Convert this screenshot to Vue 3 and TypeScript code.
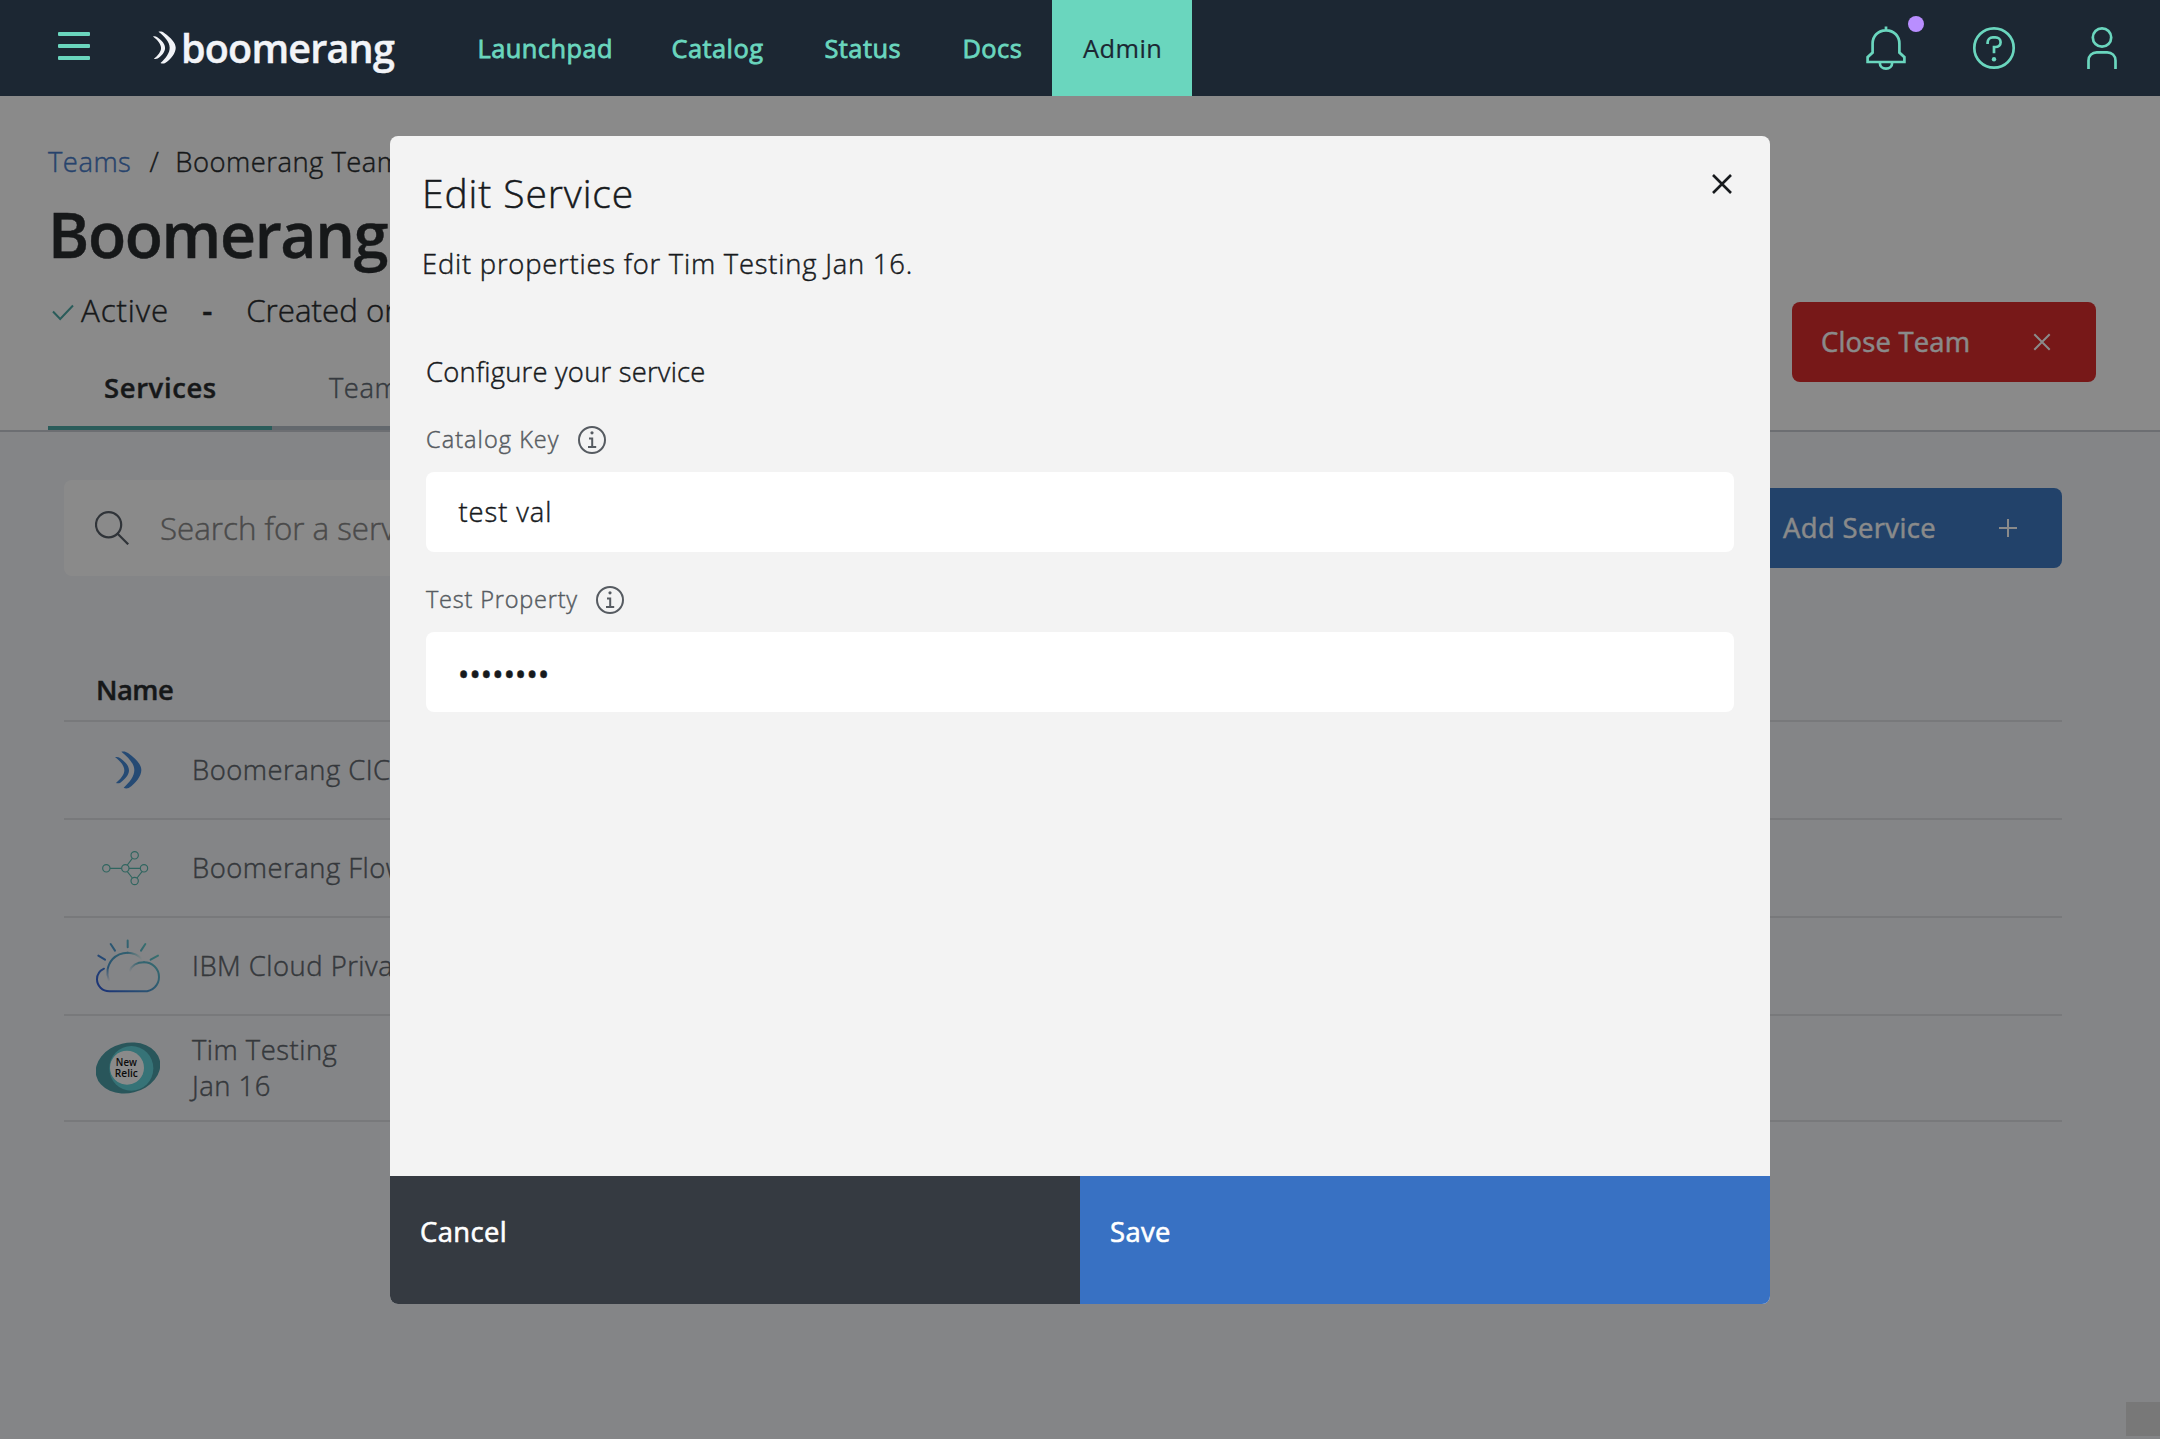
<script setup lang="ts">
interface NavLink {
  label: string
  width: number
  active?: boolean
}
interface Service {
  icon: 'boomerang' | 'flow' | 'cloud' | 'relic'
  name: string
}
interface Field {
  label: string
  value: string
  secret?: boolean
}

const links: NavLink[] = [
  { label: 'Launchpad', width: 194 },
  { label: 'Catalog', width: 153 },
  { label: 'Status', width: 138 },
  { label: 'Docs', width: 119 },
  { label: 'Admin', width: 140, active: true },
]

const services: Service[] = [
  { icon: 'boomerang', name: 'Boomerang CICD' },
  { icon: 'flow', name: 'Boomerang Flow' },
  { icon: 'cloud', name: 'IBM Cloud Private' },
  { icon: 'relic', name: 'Tim Testing\nJan 16' },
]

const fields: Field[] = [
  { label: 'Catalog Key', value: 'test val' },
  { label: 'Test Property', value: '••••••••', secret: true },
]

const wingOuter =
  'M364 335C372 333 378 335 384 339C408 356 424 374 424 390C424 408 408 430 386 444C381 446 375 446 371 443C390 426 403 408 403 390C403 372 386 352 364 335Z'
const wingInner =
  'M345 351C351 350 356 351 360 354C376 365 387 378 387 391C387 404 376 418 361 428C357 430 352 430 348 429C363 416 373 404 373 391C373 378 362 364 345 351Z'
</script>

<template>
  <div class="app">
    <header class="topbar">
      <div class="burger"><i></i><i></i><i></i></div>
      <div class="brand">
        <svg class="brand-mark" viewBox="345 333 80 113">
          <path :d="wingOuter" />
          <path :d="wingInner" />
        </svg>
        <span class="brand-name">boomerang</span>
      </div>
      <nav class="links">
        <a
          v-for="link in links"
          :key="link.label"
          class="link"
          :class="{ active: link.active }"
          :style="{ width: link.width + 'px' }"
          >{{ link.label }}</a
        >
      </nav>
      <div class="tools">
        <div class="tool bell">
          <svg viewBox="0 0 48 48" width="48" height="48">
            <path d="M24 3.5V8M24 7.3C15.8 7.3 10.6 13.4 10.6 20.5V29.6L5.6 34.2V39H42.4V34.2L37.4 29.6V20.5C37.4 13.4 32.2 7.3 24 7.3ZM17.8 39.5C17.8 43.4 20.6 45.7 24 45.7C27.4 45.7 30.2 43.4 30.2 39.5" />
          </svg>
          <span class="badge"></span>
        </div>
        <div class="tool">
          <svg viewBox="0 0 48 48" width="48" height="48">
            <circle cx="24" cy="24" r="19.7" />
            <path d="M17.6 20V18.6C17.6 15.6 19.8 13.4 22.8 13.4H25.4C28.4 13.4 30.6 15.4 30.6 18.2C30.6 21 28.4 23 25.4 23H24V29.2" />
            <circle class="solid" cx="24" cy="35.3" r="2.2" />
          </svg>
        </div>
        <div class="tool">
          <svg viewBox="0 0 48 48" width="48" height="48">
            <circle cx="24" cy="13.5" r="9.2" />
            <path d="M10.5 45V36.5C10.5 31.6 14.1 28.4 18.8 28.4H29.2C33.9 28.4 37.5 31.6 37.5 36.5V45" />
          </svg>
        </div>
      </div>
    </header>

    <section class="page-head">
      <div class="head-main">
        <div class="crumbs">
          <a class="crumb-link">Teams</a><span class="crumb-sep">/</span><span>Boomerang Team</span>
        </div>
        <h1 class="title">Boomerang</h1>
        <div class="status">
          <svg class="tick" viewBox="0 0 22 17"><path d="M1 7.5L8.2 15L21 1.5" /></svg>
          <span class="state">Active</span>
          <span class="dash">-</span>
          <span>Created on</span>
        </div>
        <div class="tabs">
          <div class="tab current">Services</div>
          <div class="tab">Team</div>
        </div>
      </div>
      <button class="btn danger">
        <span>Close Team</span>
        <svg viewBox="0 0 20 20" width="20" height="20"><path d="M2.3 2.3L17.7 17.7M17.7 2.3L2.3 17.7" /></svg>
      </button>
    </section>

    <main class="content">
      <div class="toolbar">
        <div class="search">
          <svg viewBox="0 0 34 34" width="34" height="34">
            <circle cx="13.6" cy="13.7" r="12.6" />
            <path d="M22.4 22.5L33.2 33.3" />
          </svg>
          <span>Search for a service</span>
        </div>
        <button class="btn primary">
          <span>Add Service</span>
          <svg viewBox="0 0 20 20" width="20" height="20"><path d="M10 1V19M1 10H19" /></svg>
        </button>
      </div>

      <div class="table">
        <div class="thead">Name</div>
        <div v-for="s in services" :key="s.icon" class="row" :class="{ tall: s.icon === 'relic' }">
          <svg v-if="s.icon === 'boomerang'" class="icon wing" viewBox="288 294 192 192">
            <path :d="wingOuter" />
            <path :d="wingInner" />
          </svg>
          <svg v-else-if="s.icon === 'flow'" class="icon graph" viewBox="288 588 192 192">
            <circle cx="319" cy="685" r="11" />
            <circle cx="376" cy="685" r="11" />
            <circle cx="432" cy="685" r="11" />
            <circle cx="404" cy="646" r="11" />
            <circle cx="404" cy="723" r="11" />
            <path d="M330 685H365M387 685H421M382 675L397 655M382 695L397 714M426 695L411 714" />
          </svg>
          <svg v-else-if="s.icon === 'cloud'" class="icon cloud" viewBox="288 102 192 192">
            <defs>
              <linearGradient id="sky" gradientUnits="userSpaceOnUse" x1="305" y1="275" x2="450" y2="140">
                <stop offset="0" stop-color="#2050d8" />
                <stop offset="1" stop-color="#5ccbc8" />
              </linearGradient>
              <linearGradient id="domeLeft" gradientUnits="userSpaceOnUse" x1="0" y1="244" x2="0" y2="160">
                <stop offset="0" stop-color="#3a7fd0" stop-opacity="0" />
                <stop offset=".5" stop-color="#3a8ccc" />
                <stop offset="1" stop-color="#4aa6ca" />
              </linearGradient>
              <linearGradient id="domeRight" gradientUnits="userSpaceOnUse" x1="383" y1="0" x2="427" y2="0">
                <stop offset="0" stop-color="#4aa6ca" />
                <stop offset="1" stop-color="#5ccbc8" stop-opacity="0" />
              </linearGradient>
              <linearGradient id="puff" gradientUnits="userSpaceOnUse" x1="387" y1="214" x2="420" y2="192">
                <stop offset="0" stop-color="#4aa6ca" stop-opacity="0" />
                <stop offset="1" stop-color="#52b4ca" />
              </linearGradient>
            </defs>
            <path stroke="url(#sky)" d="M383 121.500L383.100 141.500M332 132L345 152M436 132L423 152M295 167L315 179M474 167L452 179" />
            <path stroke="url(#domeLeft)" d="M327 242C318 222 321 196 338 177C350 164 366 158 383 158" />
            <path stroke="url(#domeRight)" d="M383 158C400 158 415 165 426 177" />
            <path stroke="url(#sky)" d="M312 206C299 212 291 224 291 238C291 258 307 274 328 274H432C458 274 477 255 477 231C477 206 457 187 432 187" />
            <path stroke="url(#puff)" d="M432 187C412 187 395 197 388 214" />
          </svg>
          <svg v-else class="icon" viewBox="288 408 192 192">
            <ellipse cx="384" cy="504" rx="98" ry="75" fill="#3c96a0" transform="rotate(-14 384 504)" />
            <ellipse cx="394" cy="505" rx="66" ry="67" fill="#56d0d8" />
            <circle cx="381" cy="503" r="51" fill="#fff" />
            <text x="379" y="498" textLength="63" lengthAdjust="spacingAndGlyphs">New</text>
            <text x="379" y="531" textLength="69" lengthAdjust="spacingAndGlyphs">Relic</text>
          </svg>
          <span class="name">{{ s.name }}</span>
        </div>
      </div>
    </main>

    <div class="scroll-corner"></div>

    <div class="overlay">
      <div class="modal">
        <div class="modal-body">
          <div class="modal-top">
            <h2>Edit Service</h2>
            <svg class="close" viewBox="0 0 20 20" width="20" height="20"><path d="M1 1L19 19M19 1L1 19" /></svg>
          </div>
          <p class="desc">Edit properties for Tim Testing Jan 16.</p>
          <form class="form">
            <h3>Configure your service</h3>
            <div v-for="f in fields" :key="f.label" class="field">
              <div class="label" :class="{ tight: f.secret }">
                <span>{{ f.label }}</span>
                <svg viewBox="0 0 28 28" width="28" height="28">
                  <circle cx="14" cy="14" r="13" />
                  <circle class="dot" cx="14" cy="6.800" r="1.600" />
                  <path d="M11 12.400H14.200V21M10 21H18.200" />
                </svg>
              </div>
              <div class="input" :class="{ secret: f.secret }">{{ f.value }}</div>
            </div>
          </form>
        </div>
        <div class="modal-foot">
          <button class="cancel">Cancel</button>
          <button class="save">Save</button>
        </div>
      </div>
    </div>
  </div>
</template>

<style>
body {
  margin: 0;
  overflow: hidden;
}
</style>

<style scoped>
* {
  box-sizing: border-box;
}
.app {
  position: relative;
  display: flex;
  flex-direction: column;
  width: 2160px;
  height: 1439px;
  overflow: hidden;
  background: #f2f4f8;
  color: #171a1d;
  font-family: 'Open Sans', 'Noto Sans', sans-serif;
  font-size: 27.4px;
  font-weight: 300;
  line-height: 40px;
  letter-spacing: 0.5px;
  white-space: nowrap;
  -webkit-text-stroke-width: 0.45px;
}
svg {
  display: block;
  flex: none;
  fill: none;
}
h1,
h2,
h3,
p {
  margin: 0;
}
button {
  border: 0;
  font: inherit;
  letter-spacing: inherit;
  text-align: left;
}

/* top bar */
.topbar {
  position: relative;
  z-index: 3;
  display: flex;
  flex: none;
  height: 96px;
  padding-left: 58px;
  background: #1c2733;
}
.burger {
  display: flex;
  flex-direction: column;
  gap: 8px;
  width: 32px;
  padding-top: 32px;
}
.burger i {
  height: 4px;
  border-radius: 1px;
  background: #6ad6be;
}
.brand {
  display: flex;
  width: 295px;
  margin-left: 63px;
}
.brand-mark {
  width: 23px;
  height: 33px;
  margin-top: 31px;
  fill: #f2f4f8;
}
.brand-name {
  margin-left: 5px;
  color: #f2f4f8;
  font-size: 39.5px;
  font-weight: 600;
  line-height: 96px;
  letter-spacing: -0.8px;
}
.links {
  display: flex;
}
.link {
  padding-left: 29.5px;
  color: #6ad6be;
  font-size: 25.4px;
  font-weight: 400;
  line-height: 97px;
  letter-spacing: 0.45px;
  -webkit-text-stroke-width: 0.8px;
}
.link.active {
  padding-left: 31px;
  background: #6ad6be;
  color: #1c2733;
  -webkit-text-stroke-width: 0.2px;
}
.tools {
  display: flex;
  gap: 60px;
  margin-left: auto;
  padding: 24px 34px 0 0;
}
.tool {
  position: relative;
  stroke: #6ad6be;
  stroke-width: 2.7;
}
.bell svg {
  margin-top: -1px;
}
.tool .solid {
  fill: #6ad6be;
  stroke: none;
}
.badge {
  position: absolute;
  top: -8px;
  left: 46px;
  width: 16px;
  height: 16px;
  border-radius: 50%;
  background: #b98eff;
}

/* page heading */
.page-head {
  display: flex;
  flex: none;
  justify-content: space-between;
  height: 336px;
  padding: 0 64px 0 48px;
  border-bottom: 2px solid #c2c6ce;
  background: #fff;
}
.crumbs {
  margin-top: 46px;
}
.crumb-link {
  color: #3871c3;
}
.crumb-sep {
  margin: 0 16px 0 18px;
}
.title {
  margin-top: 12px;
  font-size: 62.6px;
  font-weight: 600;
  line-height: 80px;
  letter-spacing: -1.35px;
}
.status {
  display: flex;
  margin-top: 14px;
  font-size: 31.3px;
  line-height: 44px;
  letter-spacing: 0;
}
.tick {
  width: 22px;
  height: 17px;
  margin: 16px 7px 0 4px;
  stroke: #3ea29e;
  stroke-width: 2;
}
.state {
  letter-spacing: 0.9px;
}
.dash {
  width: 10px;
  margin: 0 34px 0 33px;
  font-weight: 600;
}
.tabs {
  display: flex;
  height: 98px;
}
.tab {
  width: 224px;
  padding: 36px 0 0 57px;
  border-bottom: 4px solid #b0bac4;
  color: #565f6a;
}
.tab.current {
  padding-left: 56px;
  border-color: #3ea29e;
  color: #171a1d;
  font-weight: 600;
  letter-spacing: 0.65px;
}
.btn {
  display: flex;
  align-items: center;
  justify-content: space-between;
  height: 80px;
  padding: 0 44px 0 29px;
  border-radius: 8px;
  color: #fff;
  font-weight: 400;
  letter-spacing: 0.2px;
  stroke: #fff;
  stroke-width: 2;
}
.danger {
  width: 304px;
  margin-top: 206px;
  background: #d81a1a;
}
.primary {
  width: 308px;
  background: #2e6ebe;
  letter-spacing: 0.4px;
}
.btn span {
  stroke: none;
}

/* service list */
.content {
  padding: 48px 98px 0 64px;
}
.toolbar {
  display: flex;
  align-items: center;
  justify-content: space-between;
}
.search {
  display: flex;
  align-items: center;
  width: 700px;
  height: 96px;
  padding-left: 31px;
  border-radius: 8px;
  background: #fff;
  color: #7e7e7e;
  font-size: 31.3px;
  letter-spacing: 0;
}
.search svg {
  margin-right: 31px;
  stroke: #4a525c;
  stroke-width: 2.2;
}
.table {
  margin-top: 80px;
}
.thead,
.row {
  border-bottom: 2px solid #dadce0;
}
.thead {
  height: 66px;
  padding: 14px 0 0 32px;
  font-weight: 600;
  letter-spacing: -0.5px;
}
.row {
  display: flex;
  align-items: center;
  height: 98px;
  padding-left: 32px;
  color: #545a62;
}
.row.tall {
  height: 106px;
}
.icon {
  width: 64px;
  height: 64px;
  margin-right: 32px;
}
.wing {
  fill: #347ed2;
}
.graph {
  stroke: #48b4a8;
  stroke-width: 3.4;
}
.cloud {
  stroke-width: 6;
  stroke-linecap: round;
}
.icon text {
  fill: #000;
  font-size: 33px;
  font-weight: 600;
  letter-spacing: 0;
  text-anchor: middle;
}
.name {
  line-height: 36px;
  white-space: pre;
}

.scroll-corner {
  position: absolute;
  right: 0;
  bottom: 3px;
  width: 34px;
  height: 34px;
  background: #dadada;
}

/* dialog */
.overlay {
  position: absolute;
  inset: 0;
  z-index: 2;
  display: flex;
  align-items: flex-start;
  justify-content: center;
  padding-top: 136px;
  background: rgba(22, 22, 22, 0.5);
}
.modal {
  display: flex;
  flex-direction: column;
  width: 1380px;
  height: 1168px;
  overflow: hidden;
  border-radius: 8px;
  background: #f3f3f3;
}
.modal-body {
  flex: 1;
  padding: 27px 36px 0 32px;
}
.modal-top {
  display: flex;
  justify-content: space-between;
}
.modal-top h2 {
  font-size: 39px;
  font-weight: 300;
  line-height: 60px;
  letter-spacing: 0.9px;
}
.close {
  margin: 11px 2px 0 0;
  stroke: #171a1d;
  stroke-width: 2.6;
}
.desc {
  margin-top: 21px;
  letter-spacing: 0.78px;
}
.form {
  padding-left: 4px;
}
.form h3 {
  margin-top: 68px;
  font-size: inherit;
  font-weight: 300;
  letter-spacing: 0.22px;
}
.field {
  margin-top: 29px;
}
.label {
  display: flex;
  align-items: center;
  gap: 18px;
  color: #565b61;
  font-size: 23.5px;
  line-height: 36px;
  letter-spacing: 1.05px;
}
.label.tight {
  letter-spacing: 0.8px;
}
.label svg {
  margin-top: 2px;
  stroke: #565b61;
  stroke-width: 2;
}
.label .dot {
  fill: #565b61;
  stroke: none;
}
.input {
  height: 80px;
  margin-top: 15px;
  padding-left: 32.5px;
  border-radius: 8px;
  background: #fff;
  line-height: 80px;
  letter-spacing: 0.9px;
}
.input.secret {
  padding-left: 29.5px;
  font-size: 43px;
  line-height: 83px;
  letter-spacing: -4.75px;
}
.modal-foot {
  display: flex;
  flex: none;
  height: 128px;
}
.modal-foot button {
  flex: 1;
  padding: 0 0 16px 30px;
  color: #fff;
  font-weight: 400;
  letter-spacing: 0.4px;
  -webkit-text-stroke-width: 0.6px;
}
.cancel {
  background: #353a41;
}
.save {
  background: #3871c3;
}
</style>
